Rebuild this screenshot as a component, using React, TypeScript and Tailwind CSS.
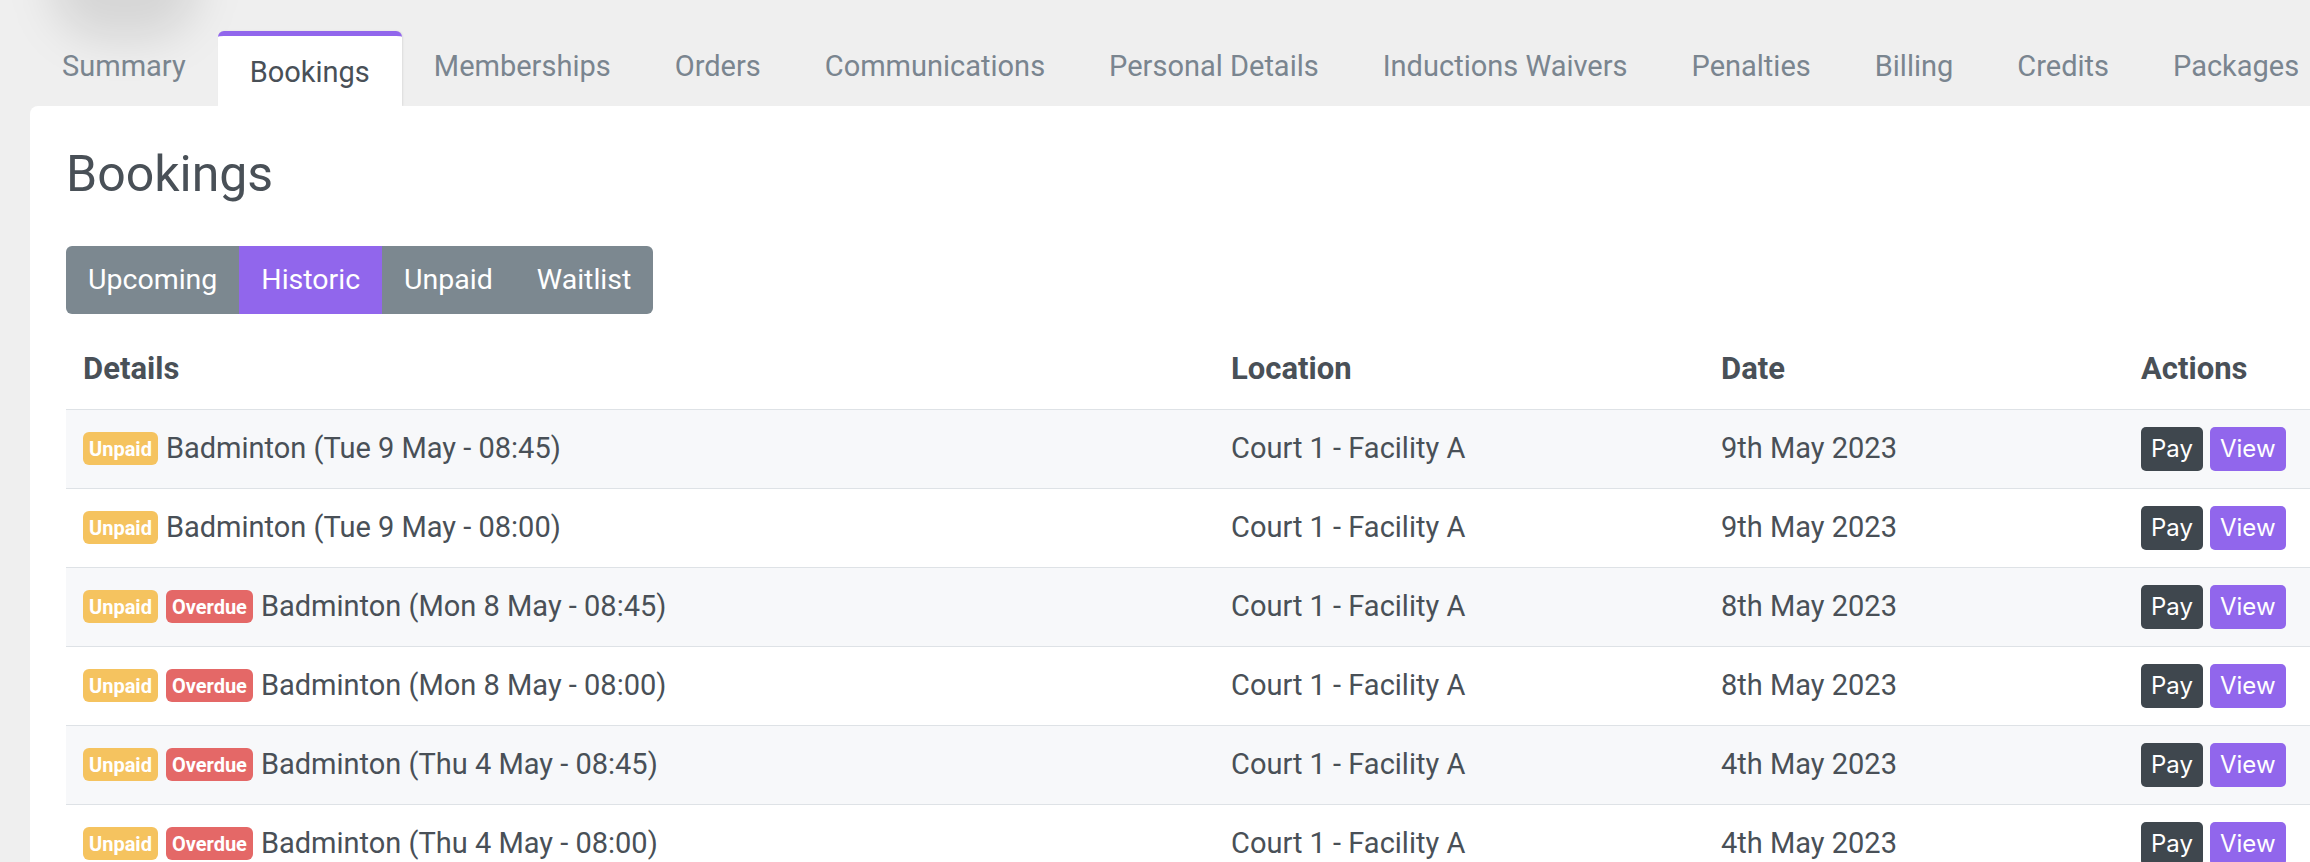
import React from "react";

const tabs = [
  "Summary",
  "Bookings",
  "Memberships",
  "Orders",
  "Communications",
  "Personal Details",
  "Inductions Waivers",
  "Penalties",
  "Billing",
  "Credits",
  "Packages",
];

const filters = ["Upcoming", "Historic", "Unpaid", "Waitlist"];

type Booking = {
  title: string;
  location: string;
  date: string;
  overdue: boolean;
};

const bookings: Booking[] = [
  { title: "Badminton (Tue 9 May - 08:45)", location: "Court 1 - Facility A", date: "9th May 2023", overdue: false },
  { title: "Badminton (Tue 9 May - 08:00)", location: "Court 1 - Facility A", date: "9th May 2023", overdue: false },
  { title: "Badminton (Mon 8 May - 08:45)", location: "Court 1 - Facility A", date: "8th May 2023", overdue: true },
  { title: "Badminton (Mon 8 May - 08:00)", location: "Court 1 - Facility A", date: "8th May 2023", overdue: true },
  { title: "Badminton (Thu 4 May - 08:45)", location: "Court 1 - Facility A", date: "4th May 2023", overdue: true },
  { title: "Badminton (Thu 4 May - 08:00)", location: "Court 1 - Facility A", date: "4th May 2023", overdue: true },
];

const Badge = ({ label, color }: { label: string; color: string }) => (
  <span
    className={`flex h-[33px] items-center rounded-[6px] px-[6px] text-[20px] font-bold leading-none text-white ${color}`}
  >
    {label}
  </span>
);

const App = () => {
  const activeTab = "Bookings";
  const activeFilter = "Historic";

  return (
    <div className="relative min-h-screen overflow-hidden bg-[#efefef] font-['Roboto',sans-serif] text-[#495057]">
      <div className="absolute left-[50px] top-[-70px] h-[110px] w-[150px] rounded-full bg-black/10 blur-[22px]" />

      <nav className="relative flex h-[106px] items-start pl-[30px] pt-[31px]">
        {tabs.map((tab) =>
          tab === activeTab ? (
            <div
              key={tab}
              className="h-[75px] rounded-t-md border-t-[5px] border-[#9166ec] bg-white px-8 pt-[15px] text-[29px] leading-[42px] text-[#495057] shadow-[1px_0_2px_rgba(0,0,0,0.08)]"
            >
              {tab}
            </div>
          ) : (
            <div
              key={tab}
              className="whitespace-nowrap px-8 pt-[14px] text-[29px] leading-[42px] text-[#7a858f]"
            >
              {tab}
            </div>
          )
        )}
      </nav>

      <div className="relative ml-[30px] min-h-[756px] rounded-tl-lg bg-white pl-9 pt-[38px]">
        <h2 className="text-[50px] font-normal leading-[1.2] text-[#495057]">
          Bookings
        </h2>

        <div className="mt-[42px] inline-flex overflow-hidden rounded-md bg-[#7c8890]">
          {filters.map((f) => (
            <button
              key={f}
              type="button"
              className={`flex h-[68px] items-center px-[22px] text-[28.5px] text-white ${
                f === activeFilter ? "bg-[#9166ec]" : ""
              }`}
            >
              {f}
            </button>
          ))}
        </div>

        <table className="mt-4 w-full table-fixed border-collapse text-left">
          <colgroup>
            <col className="w-[1148px]" />
            <col className="w-[490px]" />
            <col className="w-[420px]" />
            <col />
          </colgroup>
          <thead>
            <tr>
              <th className="h-[79px] border-b border-[#dee2e6] px-[17px] text-[31px] font-bold">
                Details
              </th>
              <th className="h-[79px] border-b border-[#dee2e6] px-[17px] text-[31px] font-bold">
                Location
              </th>
              <th className="h-[79px] border-b border-[#dee2e6] px-[17px] text-[31px] font-bold">
                Date
              </th>
              <th className="h-[79px] border-b border-[#dee2e6] px-[17px] text-[31px] font-bold">
                Actions
              </th>
            </tr>
          </thead>
          <tbody>
            {bookings.map((b, i) => (
              <tr key={b.title} className={i % 2 === 0 ? "bg-[#f7f8fa]" : "bg-white"}>
                <td className="h-[79px] border-b border-[#dee2e6] px-[17px] text-[29px]">
                  <div className="flex items-center gap-2">
                    <Badge label="Unpaid" color="bg-[#f5c35f]" />
                    {b.overdue && <Badge label="Overdue" color="bg-[#e46867]" />}
                    <span className="whitespace-nowrap">{b.title}</span>
                  </div>
                </td>
                <td className="h-[79px] border-b border-[#dee2e6] px-[17px] text-[29px]">
                  {b.location}
                </td>
                <td className="h-[79px] border-b border-[#dee2e6] px-[17px] text-[29px]">
                  {b.date}
                </td>
                <td className="h-[79px] border-b border-[#dee2e6] px-[17px]">
                  <div className="flex gap-[7px] font-['Inter',sans-serif] text-[24px] text-white">
                    <button type="button" className="h-[44px] rounded-[5px] bg-[#3f474e] px-[10px]">
                      Pay
                    </button>
                    <button type="button" className="h-[44px] rounded-[5px] bg-[#9166ec] px-[10px]">
                      View
                    </button>
                  </div>
                </td>
              </tr>
            ))}
          </tbody>
        </table>
      </div>
    </div>
  );
};

export default App;
